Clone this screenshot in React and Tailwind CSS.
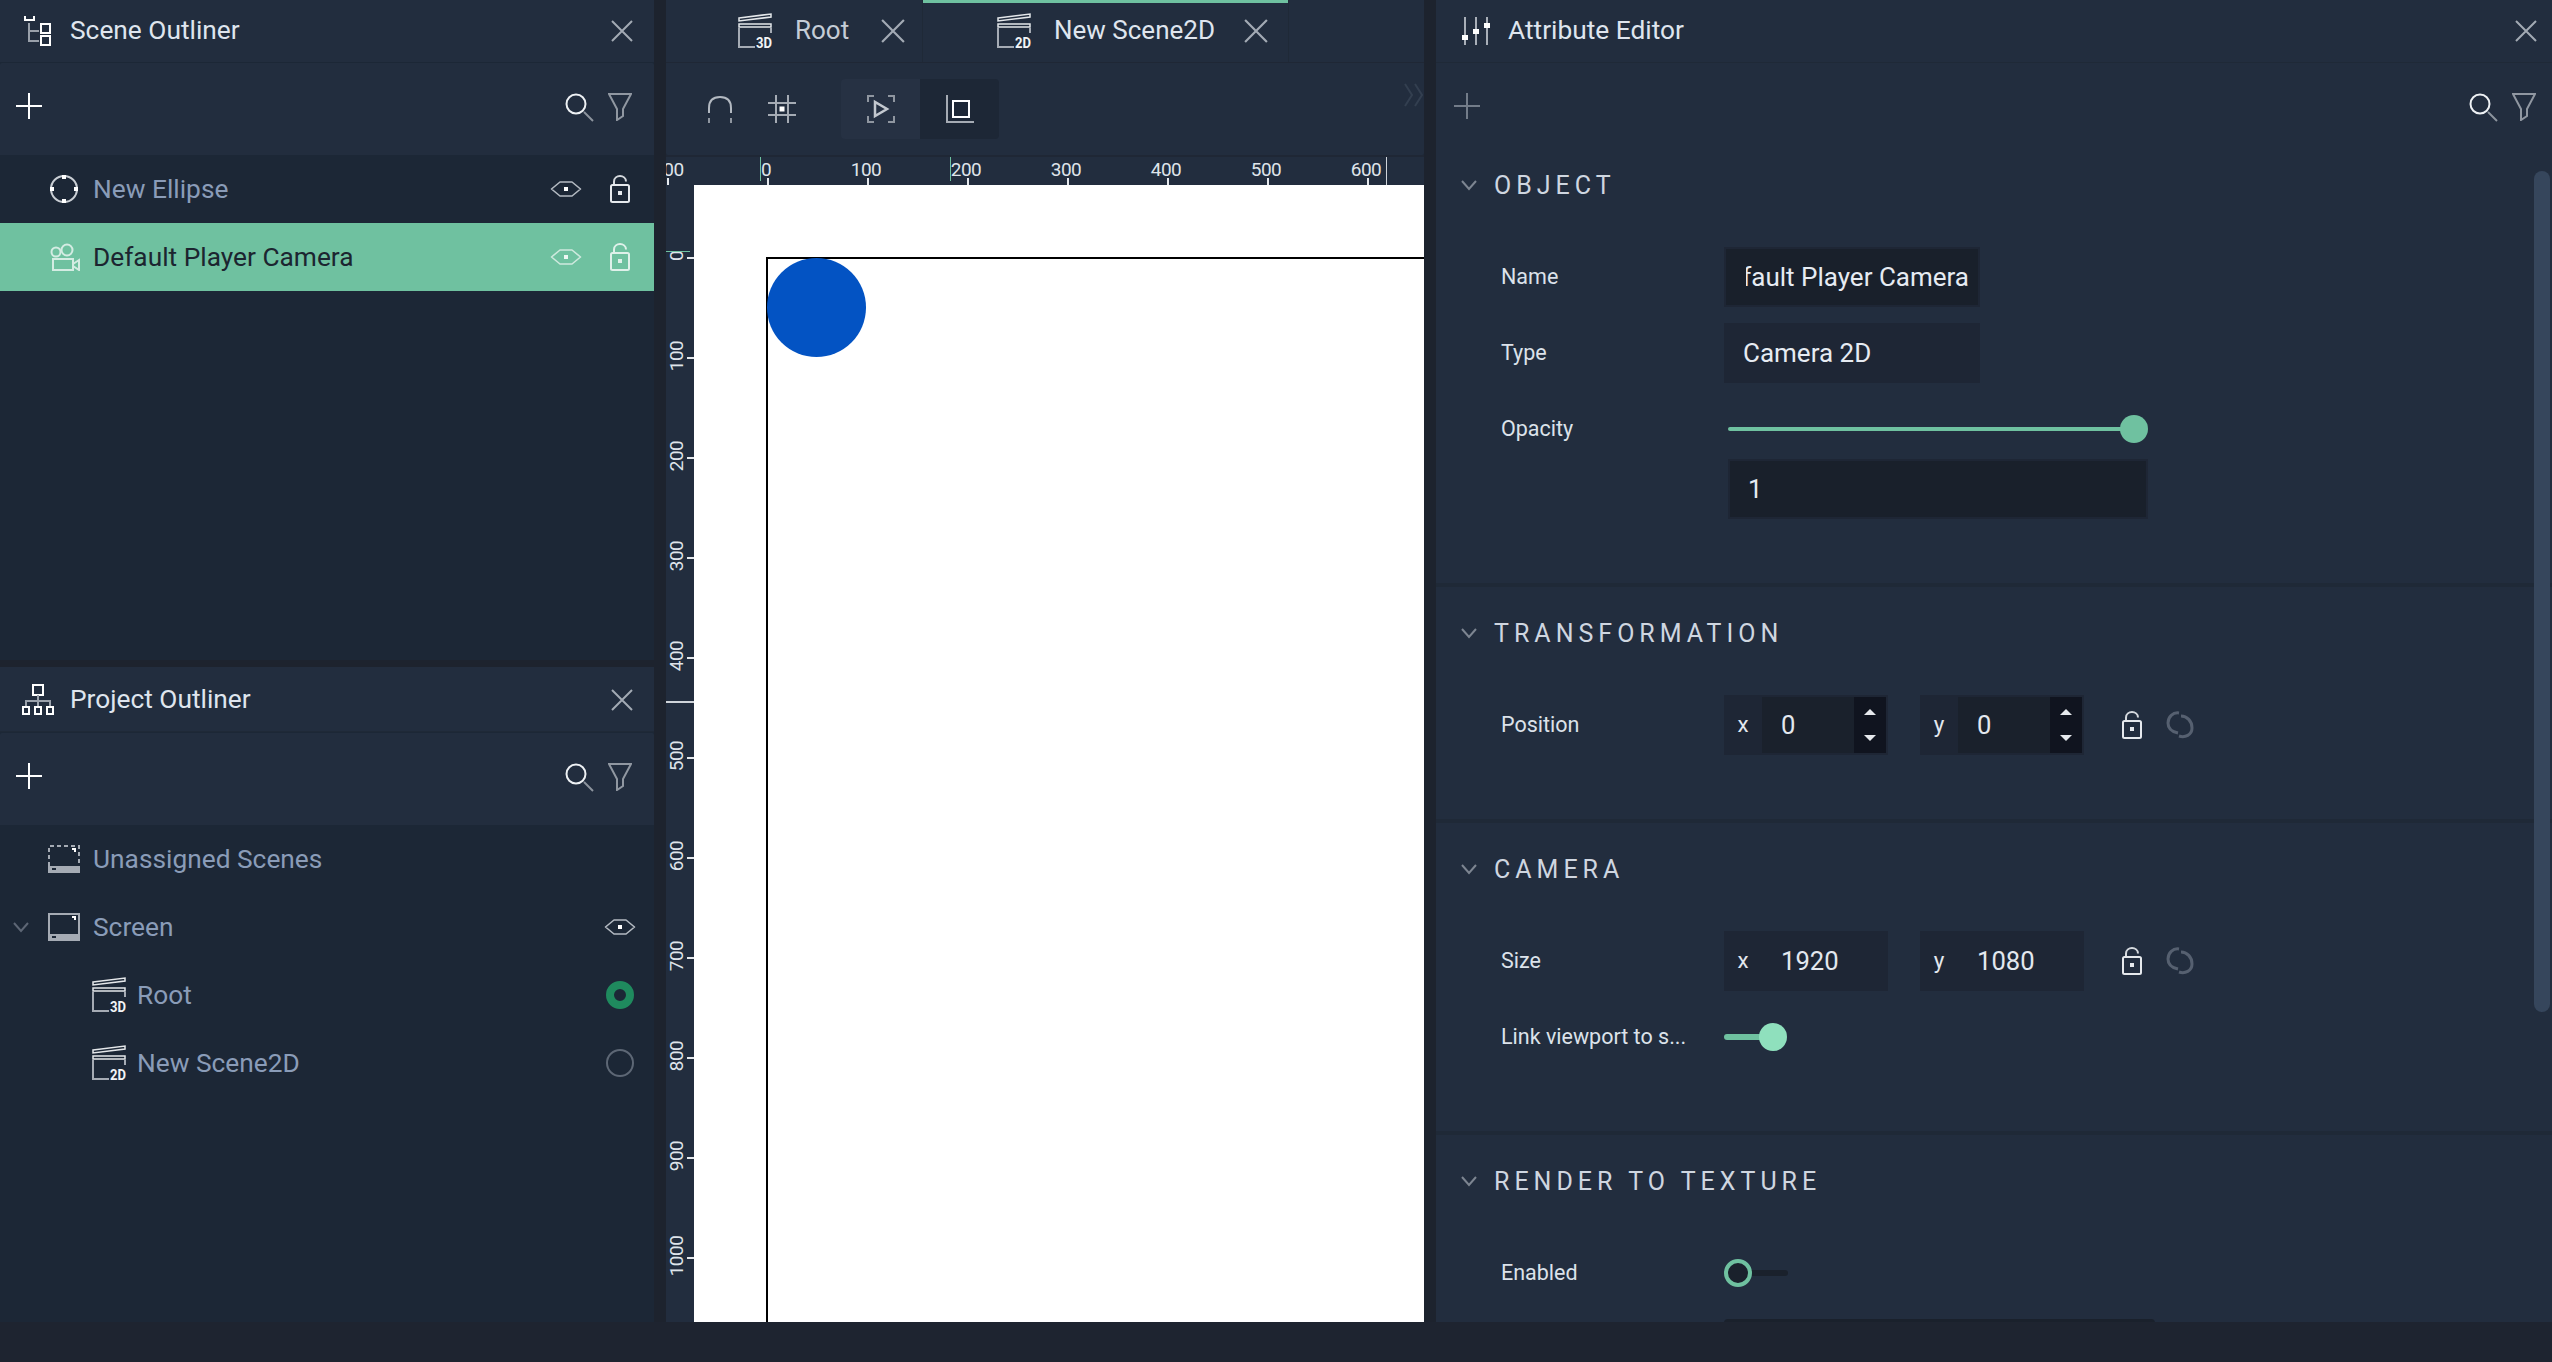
import React from "react";

const Close = ({ className = "", size = 22 }) => (
  <svg width={size} height={size} viewBox="0 0 22 22" className={className} fill="none" stroke="#a3aab4" strokeWidth="2">
    <path d="M1 1 21 21M21 1 1 21" />
  </svg>
);
const Plus = ({ color = "#fff" }) => (
  <svg width="26" height="26" viewBox="0 0 26 26" fill="none" stroke={color} strokeWidth="2"><path d="M13 0V26M0 13H26" /></svg>
);
const Search = () => (
  <svg width="30" height="30" viewBox="0 0 30 30" fill="none">
    <circle cx="11" cy="11" r="9.500" stroke="#eef1f4" strokeWidth="2" />
    <path d="M19 19 28 28" stroke="#8d949e" strokeWidth="2" />
  </svg>
);
const Funnel = () => (
  <svg width="24" height="28" viewBox="0 0 24 28" fill="none" stroke="#9097a1" strokeWidth="2">
    <path d="M1 1H23L15 16V23L9 27V16Z" />
  </svg>
);
const Eye = ({ color = "#b4bac2", dot = "#fff" }) => (
  <svg width="32" height="18" viewBox="0 0 32 18" fill="none">
    <path d="M1.500 9 10 2H22L30.500 9 22 16H10Z" stroke={color} strokeWidth="1.600" strokeLinejoin="round" />
    <rect x="14" y="7" width="4" height="4" fill={dot} />
  </svg>
);
const Lock = ({ color = "#e6e9ed", arc = "#d5d9de" }) => (
  <svg width="20" height="28" viewBox="0 0 20 28" fill="none">
    <path d="M4 10V6.500C4 3 7 1 10 1S16 3 16 6.500" stroke={arc} strokeWidth="2" />
    <rect x="1" y="10" width="18" height="17" rx="1.500" stroke={color} strokeWidth="2" />
    <rect x="8" y="16" width="4" height="4" fill={color} />
  </svg>
);
const LinkIcon = () => (
  <svg width="28" height="28" viewBox="0 0 28 28" fill="none" stroke="#566070" strokeWidth="3">
    <path d="M13 2C7 1 2 6 2 12 2 18 7 21 12 22" />
    <path d="M15 5C21 5 26 10 26 17 26 24 19 27 13 25" />
  </svg>
);
const Chevron = ({ color = "#7d8591" }) => (
  <svg width="16" height="11" viewBox="0 0 16 11" fill="none" stroke={color} strokeWidth="2"><path d="M1 1 8 9 15 1" /></svg>
);
const SceneTreeIcon = () => (
  <svg width="28" height="32" viewBox="0 0 28 32" fill="none" className="shrink-0">
    <path d="M1 1V5H10V1" stroke="#fff" strokeWidth="2" />
    <path d="M5 8V26H15M5 16H15" stroke="#99a0aa" strokeWidth="2" />
    <rect x="17" y="9" width="9" height="9" stroke="#fff" strokeWidth="2" />
    <rect x="17" y="21" width="9" height="9" stroke="#fff" strokeWidth="2" />
  </svg>
);
const ProjectTreeIcon = () => (
  <svg width="32" height="32" viewBox="0 0 32 32" fill="none" className="shrink-0">
    <rect x="11" y="1" width="10" height="10" stroke="#fff" strokeWidth="2" />
    <path d="M16 11V22M4 22V17H28V22" stroke="#9ba2ac" strokeWidth="2" />
    <rect x="1" y="23" width="6" height="7" stroke="#fff" strokeWidth="2" />
    <rect x="13" y="23" width="6" height="7" stroke="#fff" strokeWidth="2" />
    <rect x="25" y="23" width="6" height="7" stroke="#fff" strokeWidth="2" />
  </svg>
);
const SlidersIcon = () => (
  <svg width="28" height="28" viewBox="0 0 28 28" className="shrink-0">
    <path d="M3 0V28M14 0V28M25 0V28" stroke="#a9afb8" strokeWidth="2" />
    <rect x="0" y="18" width="6" height="5" fill="#fff" />
    <rect x="11" y="12" width="6" height="5" fill="#fff" />
    <rect x="22" y="6" width="6" height="5" fill="#fff" />
  </svg>
);
const Ellipse = () => (
  <svg width="28" height="28" viewBox="0 0 28 28" fill="none" className="shrink-0">
    <circle cx="14" cy="14" r="13" stroke="#c9ced4" strokeWidth="2" />
    <rect x="12" y="0" width="4" height="4" fill="#fff" /><rect x="12" y="24" width="4" height="4" fill="#fff" />
    <rect x="0" y="12" width="4" height="4" fill="#fff" /><rect x="24" y="12" width="4" height="4" fill="#fff" />
  </svg>
);
const CameraIcon = () => (
  <svg width="30" height="28" viewBox="0 0 30 28" fill="none" stroke="#d4ece3" strokeWidth="2" className="shrink-0">
    <circle cx="6" cy="9" r="4.500" /><circle cx="17" cy="7" r="5.500" />
    <rect x="3" y="16" width="20" height="11" /><path d="M23 21 29 17V27L23 23" />
  </svg>
);
const ScreenIcon = ({ dashed }) => (
  <svg width="32" height="28" viewBox="0 0 32 28" fill="none" className="shrink-0">
    <path d="M1 21V1H31V21" stroke="#a5abb4" strokeWidth="2" strokeDasharray={dashed ? "4 3" : undefined} />
    <rect x="0" y="21" width="32" height="7" fill="#a5abb4" />
    <rect x="4" y="23" width="4" height="2" fill="#1c2736" />
    <path d="M24 3H28V7H26V5H24Z" fill="#fff" />
  </svg>
);
const SceneIcon = ({ label }) => (
  <svg width="36" height="36" viewBox="0 0 36 36" fill="none" className="shrink-0">
    <path d="M1 5 33 1V4L1 8ZM1 11H33V14H1Z" stroke="#e4e7ea" strokeWidth="1.500" />
    <path d="M1 15V34H17M33 15V20" stroke="#a5abb4" strokeWidth="2" />
    <text x="26" y="35" textAnchor="middle" fill="#f2f4f6" fontSize="14" fontWeight="700" style={{ fontFamily: "Roboto, sans-serif" }} textLength="16" lengthAdjust="spacingAndGlyphs">{label}</text>
  </svg>
);

const PanelHeader = ({ icon, title, h = "h-[62px]", iconPad = "pl-[24px]", gap = "gap-[18px]", closeClass = "mr-[21px]", extra = "" }) => (
  <div className={`${h} flex items-center ${iconPad} ${gap} ${extra} bg-[#222d3e] shrink-0`}>
    {icon}
    <span className="text-[26.3px] text-[#dfe5ee] leading-none pb-[2px] whitespace-nowrap">{title}</span>
    <div className={`ml-auto ${closeClass}`}><Close /></div>
  </div>
);

const Toolbar = ({ plusColor, filterRight = "mr-[22px]" }) => (
  <div className="mt-[1px] h-[92px] shrink-0 bg-[#222d3e] flex items-start pt-[30px] pl-[16px] rounded-t-[2px]">
    <Plus color={plusColor} />
    <div className={`ml-auto flex items-start gap-[13px] ${filterRight}`}>
      <Search />
      <Funnel />
    </div>
  </div>
);

const ListRow = ({ icon, label, right, active, indent = "pl-[48px]", chevron, gap = "gap-[13px]" }) => (
  <div className={`relative h-[68px] shrink-0 flex items-center ${indent} ${gap} text-[26.3px] ${active ? "bg-[#6fc1a0] text-[#1c2530]" : "text-[#8a9cb8]"}`}>
    {chevron && <div className="absolute left-[13px] top-[29px]"><Chevron color="#5d6675" /></div>}
    {icon}
    <span className="leading-none whitespace-nowrap">{label}</span>
    <div className="ml-auto flex items-center">{right}</div>
  </div>
);

const Tab = ({ label, width, active, pad, textGap, closeLeft }) => (
  <div className={`${width} ${pad} relative h-[62px] shrink-0 flex items-center ${textGap} border-r border-[#1f2937] bg-[#222d3e] ${active ? "text-[#dfe5ee]" : "text-[#c5ccd6]"}`}>
    {active && <div className="absolute left-0 right-0 top-0 h-[3px] bg-[#6fc1a0]" />}
    {label[0]}
    <span className="text-[26px] leading-none pb-[2px] whitespace-nowrap">{label[1]}</span>
    <div className={closeLeft}><Close size={24} /></div>
  </div>
);

const xTicks = [-100, 0, 100, 200, 300, 400, 500, 600];
const yTicks = [0, 100, 200, 300, 400, 500, 600, 700, 800, 900, 1000];

const Ruler = () => (
  <div className="relative mt-[2px] h-[28px] shrink-0 bg-[#222d3e] overflow-hidden">
    {xTicks.map((t) => (
      <React.Fragment key={t}>
        <span className="absolute top-[3px] -translate-x-1/2 text-[19px] leading-[20px] tracking-[-0.5px] text-[#dfe4ea]" style={{ left: 100 + t }}>{t}</span>
        <span className="absolute top-[21px] h-[7px] w-[2px] bg-[#e6e9ed]" style={{ left: 101 + t }} />
      </React.Fragment>
    ))}
    <span className="absolute left-[94px] top-0 h-[24px] w-px bg-[#6fc1a0]" />
    <span className="absolute left-[284px] top-0 h-[24px] w-px bg-[#6fc1a0]" />
    <span className="absolute left-[720px] top-0 h-[28px] w-px bg-[#cfd4da]" />
  </div>
);

const SideRuler = () => (
  <div className="relative w-[28px] shrink-0 bg-[#222d3e] overflow-hidden">
    {yTicks.map((t) => (
      <React.Fragment key={t}>
        <span className="absolute left-[11px] -translate-x-1/2 -translate-y-1/2 -rotate-90 whitespace-nowrap text-[19px] leading-[20px] tracking-[-0.5px] text-[#dfe4ea]" style={{ top: 71 + t }}>{t}</span>
        <span className="absolute left-[21px] h-[2px] w-[7px] bg-[#e6e9ed]" style={{ top: 72 + t }} />
      </React.Fragment>
    ))}
    <span className="absolute left-0 top-[66px] h-px w-[24px] bg-[#6fc1a0]" />
    <span className="absolute left-0 top-[516px] h-[2px] w-[28px] bg-[#cfd4da]" />
  </div>
);

const SectionTitle = ({ children, h = "h-[92px]" }) => (
  <div className={`${h} shrink-0 flex items-center pl-[25px] gap-[18px]`}>
    <Chevron />
    <span className="text-[25px] leading-none tracking-[5px] -ml-[1px] text-[#cfd6e0] whitespace-nowrap">{children}</span>
  </div>
);

const Row = ({ label, children, className = "" }) => (
  <div className={`h-[60px] shrink-0 flex items-center pl-[65px] ${className}`}>
    <span className="w-[223px] shrink-0 text-[21.5px] leading-none text-[#dce2ea] whitespace-nowrap">{label}</span>
    {children}
  </div>
);

const Spinner = () => (
  <div className="w-[32px] h-[56px] bg-[#10141f] flex flex-col items-center justify-between py-[12px]">
    <div className="w-0 h-0 border-l-[6px] border-r-[6px] border-b-[6px] border-l-transparent border-r-transparent border-b-[#e6e9ed]" />
    <div className="w-0 h-0 border-l-[6px] border-r-[6px] border-t-[6px] border-l-transparent border-r-transparent border-t-[#e6e9ed]" />
  </div>
);

const NumBox = ({ axis, value, spin }) => (
  <div className="w-[164px] h-[60px] flex items-center bg-[#1e2635] pr-[2px] text-[#e3e8ef]">
    <span className="w-[38px] shrink-0 text-center text-[22.4px] leading-none pb-[2px]">{axis}</span>
    {spin ? (
      <>
        <div className="w-[92px] h-[56px] bg-[#1a212c] flex items-center pl-[19px] text-[25.6px]">{value}</div>
        <Spinner />
      </>
    ) : (
      <div className="pl-[19px] text-[25.6px]">{value}</div>
    )}
  </div>
);

const Vec = ({ x, y, spin }) => (
  <div className="flex items-center">
    <NumBox axis="x" value={x} spin={spin} />
    <div className="ml-[32px]"><NumBox axis="y" value={y} spin={spin} /></div>
    <div className="ml-[38px]"><Lock /></div>
    <div className="ml-[24px]"><LinkIcon /></div>
  </div>
);

const Sep = () => <div className="h-[4px] shrink-0 bg-[#1f2937]" />;

export default function App() {
  return (
    <div className="w-[2552px] h-[1362px] overflow-hidden flex flex-col bg-[#1d232e]" style={{ fontFamily: "Roboto, sans-serif" }}>
      <div className="h-[1322px] flex shrink-0 overflow-hidden">
        {/* left column */}
        <div className="w-[654px] shrink-0 flex flex-col">
          <div className="h-[660px] shrink-0 flex flex-col bg-[#1c2736]">
            <PanelHeader icon={<SceneTreeIcon />} title="Scene Outliner" />
            <Toolbar plusColor="#fff" />
            <ListRow
              icon={<Ellipse />}
              label="New Ellipse"
              indent="pl-[50px]"
              gap="gap-[15px]"
              right={<div className="flex items-center gap-[28px] pr-[24px]"><Eye /><Lock /></div>}
            />
            <ListRow
              active
              icon={<CameraIcon />}
              label="Default Player Camera"
              indent="pl-[50px]"
              right={<div className="flex items-center gap-[28px] pr-[24px]"><Eye color="#cfe9de" dot="#eef7f3" /><Lock color="#dff1ea" arc="#dff1ea" /></div>}
            />
          </div>
          <div className="mt-[7px] flex-1 flex flex-col bg-[#1c2736]">
            <PanelHeader icon={<ProjectTreeIcon />} title="Project Outliner" h="h-[64px]" iconPad="pl-[22px]" gap="gap-[16px]" extra="pt-[2px]" />
            <div className="h-[1px] bg-[#1f2937]" />
            <Toolbar plusColor="#fff" />
            <ListRow icon={<ScreenIcon dashed />} label="Unassigned Scenes" />
            <ListRow
              icon={<ScreenIcon />}
              label="Screen"
              chevron
              right={<div className="pr-[18px]"><Eye /></div>}
            />
            <ListRow
              icon={<SceneIcon label="3D" />}
              label="Root"
              indent="pl-[92px]"
              gap="gap-[9px]"
              right={<div className="mr-[20px] w-[28px] h-[28px] rounded-full border-[8px] border-[#1f8a5e]" />}
            />
            <ListRow
              icon={<SceneIcon label="2D" />}
              label="New Scene2D"
              indent="pl-[92px]"
              gap="gap-[9px]"
              right={<div className="mr-[20px] w-[28px] h-[28px] rounded-full border-2 border-[#5d6775]" />}
            />
          </div>
        </div>

        {/* centre */}
        <div className="ml-[12px] w-[758px] shrink-0 flex flex-col bg-[#1f2735]">
          <div className="h-[62px] shrink-0 flex bg-[#222d3e]">
            <Tab
              label={[<SceneIcon key="i" label="3D" />, "Root"]}
              width="w-[257px]"
              pad="pl-[72px]"
              textGap="gap-[21px]"
              closeLeft="ml-[11px]"
            />
            <Tab
              active
              label={[<SceneIcon key="i" label="2D" />, "New Scene2D"]}
              width="w-[366px]"
              pad="pl-[74px]"
              textGap="gap-[21px]"
              closeLeft="ml-[8px]"
            />
          </div>
          <div className="relative mt-[1px] h-[92px] shrink-0 bg-[#222d3e] flex items-start pl-[41px] pt-[32px] rounded-b-[2px]">
            <svg width="26" height="28" viewBox="0 0 26 28" fill="none" className="shrink-0">
              <path d="M2 18V13C2 6 6 2 13 2S24 6 24 13V18" stroke="#b3b9c1" strokeWidth="2" />
              <path d="M2 23V28M24 23V28" stroke="#8f96a0" strokeWidth="2" />
            </svg>
            <svg width="28" height="28" viewBox="0 0 28 28" fill="none" className="ml-[35px] shrink-0">
              <path d="M8 0V28M20 0V28M0 8H28M0 20H28" stroke="#a5abb4" strokeWidth="2" />
              <rect x="11.500" y="11.500" width="5" height="5" fill="#fff" />
            </svg>
            <div className="ml-[45px] -mt-[16px] flex h-[60px] rounded-[4px] overflow-hidden">
              <div className="w-[79px] bg-[#263143] flex items-center justify-center">
                <svg width="28" height="28" viewBox="0 0 28 28" fill="none">
                  <path d="M7 1H1V7M21 1H27V7M1 21V27H7M27 21V27H21" stroke="#8f96a0" strokeWidth="2" />
                  <path d="M8 7V21L20 14Z" stroke="#c3c8cf" strokeWidth="2.500" />
                </svg>
              </div>
              <div className="w-[79px] bg-[#1d2736] flex items-center justify-center">
                <svg width="28" height="28" viewBox="0 0 28 28" fill="none">
                  <path d="M1 0V27H28" stroke="#a5abb4" strokeWidth="2" />
                  <rect x="7" y="6" width="16" height="16" stroke="#fff" strokeWidth="2" />
                </svg>
              </div>
            </div>
            <svg width="20" height="24" viewBox="0 0 20 24" fill="none" stroke="#333f50" strokeWidth="2" className="absolute right-0 top-[20px]">
              <path d="M1 1 8 12 1 23M11 1 18 12 11 23" />
            </svg>
          </div>
          <Ruler />
          <div className="flex-1 flex min-h-0">
            <SideRuler />
            <div className="relative flex-1 bg-white overflow-hidden">
              <div className="absolute left-[72px] top-[72px] right-0 bottom-0 border-l-2 border-t-2 border-black" />
              <div className="absolute left-[73px] top-[73px] w-[99px] h-[99px] rounded-full bg-[#0353c3]" />
            </div>
          </div>
        </div>

        {/* right */}
        <div className="relative ml-[12px] flex-1 flex flex-col bg-[#222d3e] overflow-hidden">
          <PanelHeader icon={<SlidersIcon />} title="Attribute Editor" iconPad="pl-[26px]" gap="gap-[18px]" closeClass="mr-[15px]" />
          <div className="h-[1px] bg-[#1f2937] shrink-0" />
          <div className="h-[92px] shrink-0 flex items-start pt-[30px] pl-[18px]">
            <Plus color="#737c89" />
            <div className="ml-auto mr-[16px] flex items-start gap-[13px]"><Search /><Funnel /></div>
          </div>

          <SectionTitle h="h-[60px]">OBJECT</SectionTitle>
          <div className="h-[368px] shrink-0 pt-[32px] flex flex-col gap-[16px]">
            <Row label="Name">
              <div className="w-[256px] h-[60px] flex items-center border-2 border-[#1e2635] bg-[#19202b] pl-[20px] pr-[9px]">
                <div className="flex-1 min-w-0 overflow-hidden flex justify-end whitespace-nowrap text-[26px] text-[#e6ebf2]">
                  <span className="shrink-0">Default Player Camera</span>
                </div>
              </div>
            </Row>
            <Row label="Type">
              <div className="w-[256px] h-[60px] flex items-center bg-[#1e2635] pl-[19px] text-[26px] text-[#e6ebf2]">Camera 2D</div>
            </Row>
            <Row label="Opacity">
              <div className="ml-[4px] w-[420px] relative h-[28px] flex items-center">
                <div className="w-[395px] h-[4px] rounded-full bg-[#6fc1a0]" />
                <div className="absolute left-[392px] top-0 w-[28px] h-[28px] rounded-full bg-[#6fc1a0]" />
              </div>
            </Row>
            <div className="-mt-[16px] ml-[288px] flex">
              <div className="ml-[4px] w-[420px] h-[60px] flex items-center border-2 border-[#1e2635] bg-[#19202b] pl-[18px] text-[25.6px] text-[#e6ebf2]">1</div>
            </div>
          </div>
          <Sep />

          <div className="h-[232px] shrink-0">
            <SectionTitle>TRANSFORMATION</SectionTitle>
            <Row label="Position" className="mt-[16px]"><Vec x="0" y="0" spin /></Row>
          </div>
          <Sep />

          <div className="h-[308px] shrink-0">
            <SectionTitle>CAMERA</SectionTitle>
            <Row label="Size" className="mt-[16px]"><Vec x="1920" y="1080" /></Row>
            <Row label="Link viewport to s..." className="mt-[16px]">
              <div className="relative w-[64px] h-[28px] flex items-center">
                <div className="w-[40px] h-[6px] rounded-full bg-[#6fc1a0]" />
                <div className="absolute left-[35px] top-0 w-[28px] h-[28px] rounded-full bg-[#8fe0bd]" />
              </div>
            </Row>
          </div>
          <Sep />

          <div className="shrink-0">
            <SectionTitle>RENDER TO TEXTURE</SectionTitle>
            <Row label="Enabled" className="mt-[16px]">
              <div className="relative w-[64px] h-[28px] flex items-center">
                <div className="ml-[20px] w-[44px] h-[6px] rounded-full bg-[#1a212c]" />
                <div className="absolute left-0 top-0 w-[28px] h-[28px] rounded-full border-[4px] border-[#6fc1a0] bg-[#1a212c]" />
              </div>
            </Row>
            <div className="mt-[16px] ml-[288px] w-[431px] h-[60px] rounded-[4px] bg-[#1a212c]" />
          </div>

          <div className="absolute left-[1098px] top-[171px] w-[16px] h-[841px] rounded-full bg-[#36465c]" />
        </div>
      </div>
      <div className="h-[40px] shrink-0 bg-[#1e2430]" />
    </div>
  );
}
